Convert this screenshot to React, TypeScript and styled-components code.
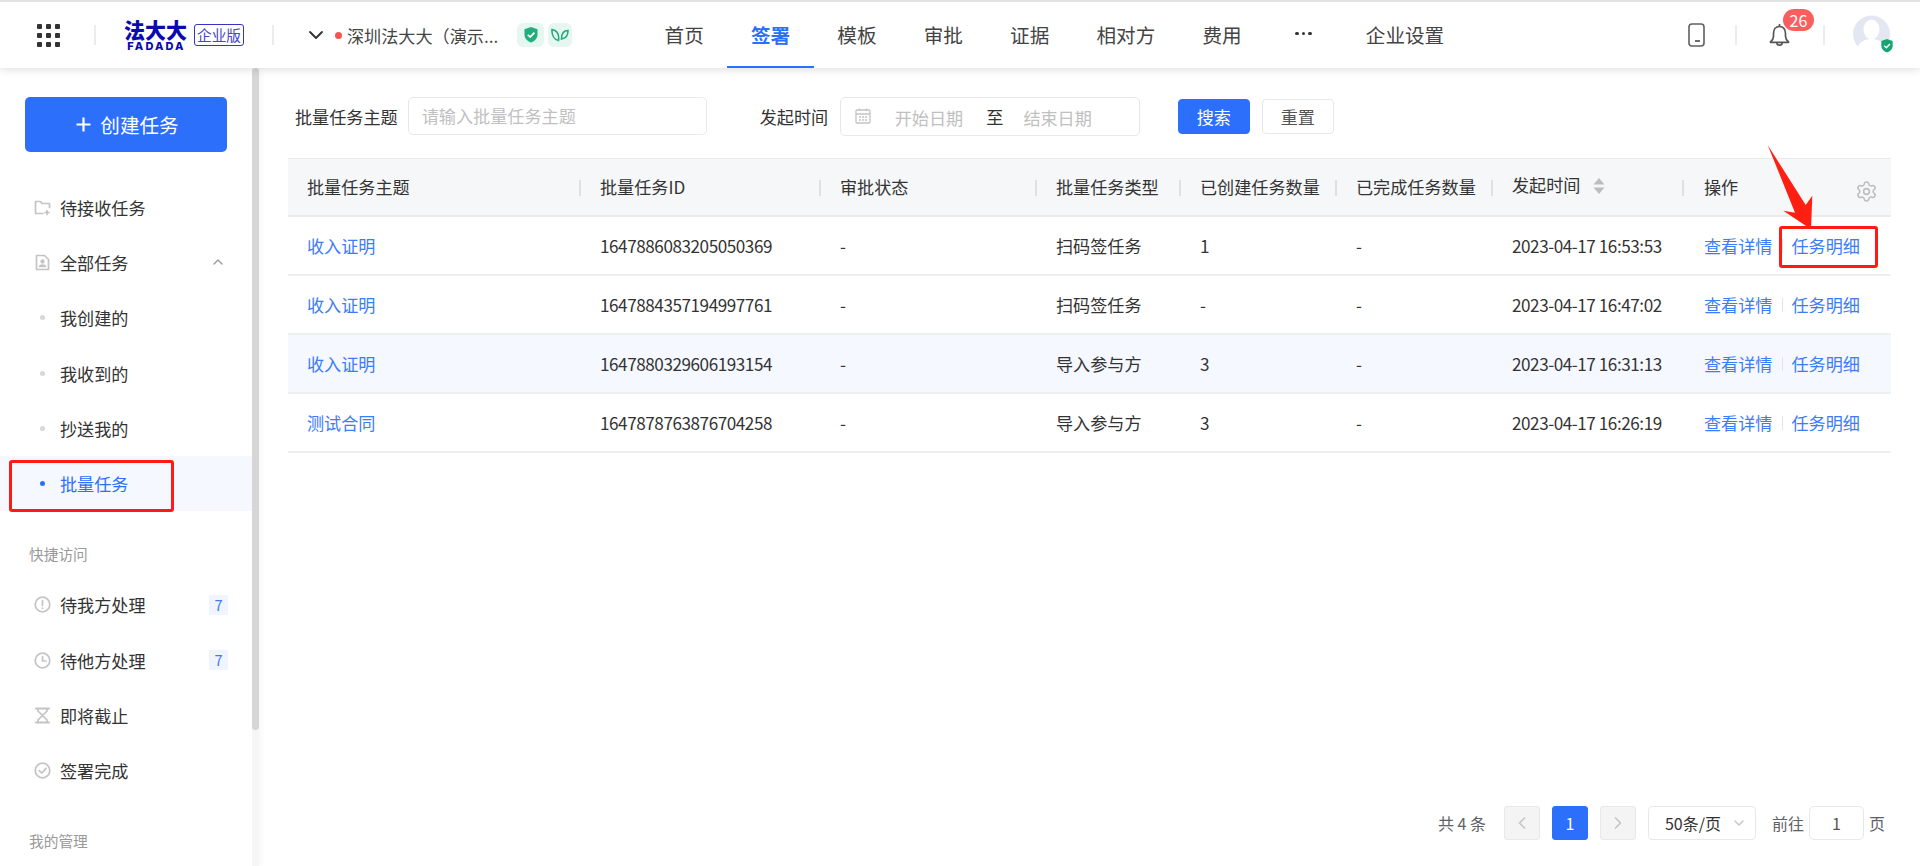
import React from "react";
import styled, { createGlobalStyle } from "styled-components";
import { ChevronDown, ChevronLeft, ChevronRight, ChevronUp, Settings } from "lucide-react";

const Global = createGlobalStyle`
  html, body { margin: 0; padding: 0; height: 100%; overflow: hidden; background: #fff; }
  body { font-family: "Noto Sans CJK SC", "Noto Sans", sans-serif; color: #333; font-size: 17.14px; }
  * { box-sizing: border-box; }
`;

const Page = styled.div`
  width: 1920px;
  height: 866px;
  display: flex;
  flex-direction: column;
  overflow: hidden;
`;

/* ---------- header ---------- */
const Header = styled.header`
  height: 68px;
  flex-shrink: 0;
  display: flex;
  align-items: stretch;
  background: #fff;
  border-top: 2px solid #e2e2e2;
  box-shadow: 0 2px 8px rgba(0, 0, 0, 0.12);
  position: relative;
  z-index: 2;
`;
const HeaderLeft = styled.div`
  width: 641px;
  flex-shrink: 0;
  padding-left: 37px;
  display: flex;
  align-items: center;
`;
const VRule = styled.span`
  width: 2px;
  height: 20px;
  background: #ececec;
  flex-shrink: 0;
`;
const AppsIcon = styled.svg`
  width: 23px;
  height: 23px;
  margin-right: 34px;
  flex-shrink: 0;
`;
const Logo = styled.div`
  width: 59px;
  margin-left: 30px;
  display: flex;
  flex-direction: column;
  align-items: center;
  color: #0a0ab0;
  flex-shrink: 0;
`;
const LogoCn = styled.span`
  font-size: 21px;
  font-weight: 900;
  line-height: 21px;
  white-space: nowrap;
`;
const LogoEn = styled.span`
  font-family: "Inter", sans-serif;
  font-size: 11px;
  font-weight: 800;
  line-height: 10px;
  margin-top: 1px;
  margin-right: -2px;
  letter-spacing: 2.1px;
`;
const Edition = styled.span`
  width: 50px;
  height: 22px;
  margin-left: 9px;
  margin-right: 28px;
  border: 1.5px solid #3434c8;
  border-radius: 3px;
  color: #4646cc;
  font-size: 14.7px;
  line-height: 19px;
  text-align: center;
  flex-shrink: 0;
`;
const SwitchChevron = styled(ChevronDown)`
  margin-left: 30px;
  color: #333;
  flex-shrink: 0;
`;
const RedDot = styled.span`
  width: 7px;
  height: 7px;
  border-radius: 50%;
  background: #f4554f;
  margin-left: 7px;
  flex-shrink: 0;
`;
const Company = styled.span`
  margin-left: 5px;
  width: 170px;
  white-space: nowrap;
  color: #444;
  flex-shrink: 0;
`;
const CertBox = styled.span<{ $w: number }>`
  width: ${(p) => p.$w}px;
  height: 24px;
  margin-right: 4px;
  border-radius: 6px;
  background: #e6f6f0;
  display: flex;
  align-items: center;
  justify-content: center;
  flex-shrink: 0;
`;
const Nav = styled.nav`
  display: flex;
  align-items: stretch;
`;
const NavItem = styled.a<{ $active?: boolean }>`
  padding: 0 23.6px;
  display: flex;
  align-items: center;
  height: 66px;
  font-size: 19.6px;
  color: ${(p) => (p.$active ? "#2b6ffb" : "#444")};
  font-weight: ${(p) => (p.$active ? 700 : 400)};
  border-bottom: 2px solid ${(p) => (p.$active ? "#2b6ffb" : "transparent")};
  white-space: nowrap;
`;
const NavMore = styled.span`
  width: 77px;
  display: flex;
  align-items: center;
  justify-content: center;
  gap: 3px;
  padding-bottom: 3px;
`;
const NavDot = styled.i`
  width: 3.5px;
  height: 3.5px;
  border-radius: 50%;
  background: #333;
`;
const HeaderRight = styled.div`
  margin-left: auto;
  padding-right: 30px;
  display: flex;
  align-items: center;
  gap: 30px;
`;
const PhoneIcon = styled.svg`
  width: 17px;
  height: 24px;
`;
const BellWrap = styled.span`
  position: relative;
  margin: 0 3px 0 2px;
  width: 21px;
  height: 24px;
  display: flex;
`;
const BellBadge = styled.span`
  position: absolute;
  left: 14px;
  top: -14px;
  width: 31px;
  height: 22px;
  border-radius: 11px;
  background: #f95f5f;
  color: #fff;
  font-size: 16px;
  line-height: 22px;
  text-align: center;
`;
const AvatarWrap = styled.span`
  position: relative;
  width: 37px;
  height: 38px;
  display: flex;
  margin: -2px 0 0 -2px;
`;
const AvatarBadge = styled.svg`
  position: absolute;
  left: 27px;
  top: 23px;
  width: 14px;
  height: 16px;
`;

/* ---------- body ---------- */
const Body = styled.div`
  flex: 1;
  min-height: 0;
  display: flex;
`;
const Sidebar = styled.aside`
  width: 252px;
  flex-shrink: 0;
  overflow: hidden;
  padding-top: 29px;
`;
const CreateButton = styled.button`
  display: flex;
  align-items: center;
  justify-content: center;
  gap: 9px;
  margin-left: 25px;
  padding-left: 9px;
  width: 202px;
  height: 55px;
  border: 0;
  border-radius: 5px;
  background: #2b6ffb;
  color: #fff;
  font-family: inherit;
  font-size: 19.6px;
`;
const PlusMark = styled.svg`
  width: 15px;
  height: 15px;
`;
const Menu = styled.div`
  margin-top: 27.5px;
`;
const MenuRow = styled.div<{ $active?: boolean }>`
  position: relative;
  height: 55.3px;
  display: flex;
  align-items: center;
  padding-left: 34px;
  background: ${(p) => (p.$active ? "#f5f8ff" : "transparent")};
  color: ${(p) => (p.$active ? "#2b6ffb" : "#333")};
`;
const MenuIcon = styled.svg`
  width: 17px;
  height: 17px;
  margin-right: 9px;
  flex-shrink: 0;
  color: #c4c4c4;
`;
const Bullet = styled.i<{ $active?: boolean }>`
  width: 5px;
  height: 5px;
  border-radius: 50%;
  margin-left: 6px;
  margin-right: 15px;
  background: ${(p) => (p.$active ? "#2b6ffb" : "#d8d8d8")};
  flex-shrink: 0;
`;
const ExpandIcon = styled(ChevronUp)`
  margin-left: auto;
  margin-right: 26px;
  color: #999;
`;
const Count = styled.span`
  margin-left: auto;
  margin-right: 24px;
  width: 19px;
  height: 20px;
  background: #f0f4ff;
  color: #3f7bf6;
  font-size: 14.7px;
  line-height: 20px;
  text-align: center;
`;
const SectionTitle = styled.div`
  margin: 34px 0 14px 29px;
  font-size: 14.7px;
  line-height: 18px;
  color: #999;
`;
const SideAnnotation = styled.span`
  position: absolute;
  left: 9px;
  top: 4px;
  width: 165px;
  height: 52px;
  border: 3px solid #ff1a12;
  border-radius: 3px;
`;
const ScrollTrack = styled.div`
  width: 7px;
  flex-shrink: 0;
  background: #f6f6f6;
  box-shadow: 3px 0 5px rgba(0, 0, 0, 0.03);
`;
const ScrollThumb = styled.div`
  height: 662px;
  background: #d6d6d6;
  border-radius: 4px;
`;
const Main = styled.main`
  flex: 1;
  min-width: 0;
  display: flex;
  flex-direction: column;
  padding: 28px 29px 26px;
`;
const FilterBar = styled.div`
  height: 40px;
  display: flex;
  align-items: center;
  padding-left: 7px;
  flex-shrink: 0;
`;
const FilterLabel = styled.label`
  margin-right: 10px;
  white-space: nowrap;
`;
const TextInput = styled.div`
  width: 299px;
  height: 38px;
  margin-right: 53px;
  padding-left: 13px;
  border: 1px solid #e8e8e8;
  border-radius: 5px;
  color: #c0c0c0;
  line-height: 36px;
`;
const DateRange = styled.div`
  width: 300px;
  height: 39px;
  margin: 0 38px 0 1.5px;
  padding-left: 14px;
  display: flex;
  align-items: center;
  border: 1px solid #e8e8e8;
  border-radius: 5px;
`;
const CalendarIcon = styled.svg`
  width: 16px;
  height: 16px;
  margin-right: 24px;
  color: #c4c4c4;
  flex-shrink: 0;
`;
const DateHint = styled.span`
  color: #c0c0c0;
  padding-top: 3px;
`;
const DateTo = styled.span`
  margin: 0 20px 0 23px;
`;
const FilterButton = styled.button<{ $primary?: boolean }>`
  width: 72px;
  height: 35px;
  margin-right: 12px;
  border: 1px solid ${(p) => (p.$primary ? "#2b6ffb" : "#e8e8e8")};
  border-radius: 4px;
  background: ${(p) => (p.$primary ? "#2b6ffb" : "#fff")};
  color: ${(p) => (p.$primary ? "#fff" : "#555")};
  font-family: inherit;
  font-size: 17.14px;
`;

const Table = styled.div`
  position: relative;
  margin-top: 22px;
  flex-shrink: 0;
`;
const columns = "293px 240px 216px 144px 156px 156px 191px 1fr";
const HeadRow = styled.div`
  display: grid;
  grid-template-columns: ${columns};
  height: 59px;
  background: #f6f7f9;
  border-top: 1px solid #e8eaec;
  border-bottom: 2px solid #e8eaec;
`;
const HeadCell = styled.div`
  position: relative;
  display: flex;
  align-items: center;
  padding: 0 0 2px 19px;
  white-space: nowrap;
  color: #333;
  &:last-child {
    padding-left: 20px;
  }
  &:not(:last-child)::after {
    content: "";
    position: absolute;
    right: 0;
    top: 21px;
    width: 2px;
    height: 16px;
    background: #e0e0e0;
  }
`;
const SortIcon = styled.svg`
  width: 12px;
  height: 16px;
  margin-left: 12px;
`;
const TimeHead = styled.span`
  position: relative;
  top: -2px;
`;
const GearIcon = styled(Settings)`
  position: absolute;
  left: 171px;
  top: 21px;
  color: #bdbdbd;
`;
const Row = styled.div<{ $hover?: boolean }>`
  display: grid;
  grid-template-columns: ${columns};
  height: 59px;
  border-bottom: 2px solid #eeeff1;
  background: ${(p) => (p.$hover ? "#f5f8ff" : "#fff")};
`;
const Cell = styled.div`
  position: relative;
  display: flex;
  align-items: center;
  padding-left: 19px;
  white-space: nowrap;
  &:last-child {
    padding-left: 20px;
  }
`;
const Numeric = styled.span`
  letter-spacing: -0.45px;
`;
const Link = styled.a`
  color: #3c7cf8;
`;
const OpRule = styled.span`
  width: 1px;
  height: 14px;
  margin: 0 9px;
  background: #e2e4e8;
`;
const OpAnnotation = styled.span`
  position: absolute;
  left: 95px;
  top: 9px;
  width: 99px;
  height: 42px;
  border: 3px solid #ff1a12;
  border-radius: 3px;
`;
const Arrow = styled.svg`
  position: absolute;
  left: 1479px;
  top: -13px;
  width: 46px;
  height: 86px;
`;

const Pagination = styled.div`
  margin-top: auto;
  height: 34px;
  padding-right: 6px;
  display: flex;
  align-items: center;
  justify-content: flex-end;
  font-size: 16px;
  color: #606266;
  flex-shrink: 0;
`;
const Total = styled.span`
  margin-right: 18px;
  white-space: pre;
`;
const PageBtn = styled.span<{ $current?: boolean }>`
  width: 36px;
  height: 34px;
  margin-right: 12px;
  display: flex;
  align-items: center;
  justify-content: center;
  border: 1px solid ${(p) => (p.$current ? "#2b6ffb" : "#e8e8e8")};
  border-radius: 3px;
  background: ${(p) => (p.$current ? "#2b6ffb" : "#f4f4f4")};
  color: ${(p) => (p.$current ? "#fff" : "#c4c4c4")};
`;
const SizeSelect = styled.span`
  width: 108px;
  height: 34px;
  margin-right: 16px;
  padding: 0 8px 0 16px;
  display: flex;
  align-items: center;
  justify-content: space-between;
  border: 1px solid #e8e8e8;
  border-radius: 4px;
  color: #333;
`;
const JumpInput = styled.span`
  width: 55px;
  height: 34px;
  margin: 0 5px;
  border: 1px solid #e8e8e8;
  border-radius: 5px;
  text-align: center;
  line-height: 32px;
  color: #555;
`;

/* ---------- data ---------- */
const rows = [
  { name: "收入证明", id: "1647886083205050369", type: "扫码签任务", made: "1", time: "2023-04-17 16:53:53" },
  { name: "收入证明", id: "1647884357194997761", type: "扫码签任务", made: "-", time: "2023-04-17 16:47:02" },
  { name: "收入证明", id: "1647880329606193154", type: "导入参与方", made: "3", time: "2023-04-17 16:31:13" },
  { name: "测试合同", id: "1647878763876704258", type: "导入参与方", made: "3", time: "2023-04-17 16:26:19" },
];

const Apps = () => (
  <AppsIcon viewBox="0 0 23 23" fill="#333">
    {[0, 9, 18].map((y) =>
      [0, 9, 18].map((x) => <rect key={`${x}-${y}`} x={x} y={y} width="5" height="5" rx="1" />)
    )}
  </AppsIcon>
);

const Glyph = ({ children }: { children: React.ReactNode }) => (
  <MenuIcon viewBox="0 0 17 17" fill="none" stroke="currentColor" strokeWidth="1.7" strokeLinecap="round" strokeLinejoin="round">
    {children}
  </MenuIcon>
);

const ShieldPath = "M8 1 L14.5 3.2 V8.5 C14.5 12.5 11.5 15.2 8 16.5 C4.5 15.2 1.5 12.5 1.5 8.5 V3.2 Z";

export default function App() {
  return (
    <Page>
      <Global />
      <Header>
        <HeaderLeft>
          <Apps />
          <VRule />
          <Logo>
            <LogoCn>法大大</LogoCn>
            <LogoEn>FADADA</LogoEn>
          </Logo>
          <Edition>企业版</Edition>
          <VRule />
          <SwitchChevron size={24} strokeWidth={1.9} />
          <RedDot />
          <Company>深圳法大大（演示...</Company>
          <CertBox $w={27}>
            <svg width="16" height="18" viewBox="0 0 16 18">
              <path d={ShieldPath} fill="#22ad7c" />
              <path d="M4.8 8.8 L7.2 11 L11.4 6.6" fill="none" stroke="#fff" strokeWidth="1.7" />
            </svg>
          </CertBox>
          <CertBox $w={24}>
            <svg width="18" height="14" viewBox="0 0 18 14" fill="none" stroke="#22ad7c" strokeWidth="1.6">
              <path d="M1 1.5 C6 2.5 8.5 6 7.5 12.5 C3.5 11.5 0.5 7.5 1 1.5 Z" />
              <path d="M17 2.5 C13 2.5 10.5 5 10.5 11 C14.5 10.5 17 7.5 17 2.5 Z" />
            </svg>
          </CertBox>
        </HeaderLeft>
        <Nav>
          <NavItem>首页</NavItem>
          <NavItem $active>签署</NavItem>
          <NavItem>模板</NavItem>
          <NavItem>审批</NavItem>
          <NavItem>证据</NavItem>
          <NavItem>相对方</NavItem>
          <NavItem>费用</NavItem>
          <NavMore>
            <NavDot />
            <NavDot />
            <NavDot />
          </NavMore>
          <NavItem>企业设置</NavItem>
        </Nav>
        <HeaderRight>
          <PhoneIcon viewBox="0 0 17 24" fill="none" stroke="#606060" strokeWidth="1.6">
            <rect x="1" y="1" width="15" height="22" rx="3" />
            <path d="M7 18 H12" strokeWidth="1.8" />
          </PhoneIcon>
          <VRule />
          <BellWrap>
            <svg width="21" height="24" viewBox="0 0 21 24" fill="none" stroke="#555" strokeWidth="1.7">
              <path d="M10.5 1 V3.5" />
              <path d="M10.5 3.5 C6.5 3.5 4.5 6.5 4.5 10.5 V13.5 C4.5 15.8 3 17.5 1.5 18.8 V19.3 H19.5 V18.8 C18 17.5 16.5 15.8 16.5 13.5 V10.5 C16.5 6.5 14.5 3.5 10.5 3.5 Z" strokeLinejoin="round" />
              <path d="M7.8 19.5 A2.7 2.7 0 0 0 13.2 19.5" />
            </svg>
            <BellBadge>26</BellBadge>
          </BellWrap>
          <VRule />
          <AvatarWrap>
            <svg width="37" height="38" viewBox="0 0 37 38">
              <circle cx="18.5" cy="19" r="18.5" fill="#e3e7f2" />
              <ellipse cx="18.5" cy="14.5" rx="8" ry="10" fill="#fff" />
              <path d="M4 33 C7 26 13 24 18.5 24 C24 24 30 26 33 33 C29 36.5 24 37.8 18.5 37.8 C13 37.8 8 36.5 4 33 Z" fill="#fff" />
            </svg>
            <AvatarBadge viewBox="0 0 16 18">
              <path d={ShieldPath} fill="#17a673" />
              <path d="M4.8 8.8 L7.2 11 L11.4 6.6" fill="none" stroke="#fff" strokeWidth="1.7" />
            </AvatarBadge>
          </AvatarWrap>
        </HeaderRight>
      </Header>

      <Body>
        <Sidebar>
          <CreateButton>
            <PlusMark viewBox="0 0 15 15" stroke="#fff" strokeWidth="2.2">
              <path d="M7.5 0.5 V14.5 M0.5 7.5 H14.5" />
            </PlusMark>
            创建任务
          </CreateButton>
          <Menu>
            <MenuRow>
              <Glyph>
                <path d="M15.5 8.5 V4.5 H8 L6.5 2.5 H1.5 V14.5 H9" />
                <path d="M13 11.5 V15.5 M11 13.5 H15" />
              </Glyph>
              待接收任务
            </MenuRow>
            <MenuRow>
              <Glyph>
                <path d="M2.5 1.5 H10.5 L14.5 5.5 V15.5 H2.5 Z" />
                <circle cx="8.5" cy="7.5" r="1.3" fill="currentColor" />
                <path d="M5.5 12.3 C6.3 10.8 10.7 10.8 11.5 12.3 Z" fill="currentColor" />
              </Glyph>
              全部任务
              <ExpandIcon size={16} strokeWidth={2} />
            </MenuRow>
            <MenuRow>
              <Bullet />
              我创建的
            </MenuRow>
            <MenuRow>
              <Bullet />
              我收到的
            </MenuRow>
            <MenuRow>
              <Bullet />
              抄送我的
            </MenuRow>
            <MenuRow $active>
              <Bullet $active />
              批量任务
              <SideAnnotation />
            </MenuRow>
          </Menu>
          <SectionTitle>快捷访问</SectionTitle>
          <MenuRow>
            <Glyph>
              <circle cx="8.5" cy="8.5" r="7.3" />
              <path d="M8.5 4.5 V9.5 M8.5 12 V12.4" />
            </Glyph>
            待我方处理
            <Count>7</Count>
          </MenuRow>
          <MenuRow>
            <Glyph>
              <circle cx="8.5" cy="8.5" r="7.3" />
              <path d="M8.5 4.5 V9 H12" />
            </Glyph>
            待他方处理
            <Count>7</Count>
          </MenuRow>
          <MenuRow>
            <Glyph>
              <path d="M2 1.5 H15 M2 15.5 H15" strokeWidth="2.2" />
              <path d="M4 2 V4 L13 13 V15 M13 2 V4 L4 13 V15" />
            </Glyph>
            即将截止
          </MenuRow>
          <MenuRow>
            <Glyph>
              <circle cx="8.5" cy="8.5" r="7.3" />
              <path d="M5.2 8.6 L7.8 11 L12 6.4" />
            </Glyph>
            签署完成
          </MenuRow>
          <SectionTitle>我的管理</SectionTitle>
        </Sidebar>
        <ScrollTrack>
          <ScrollThumb />
        </ScrollTrack>
        <Main>
          <FilterBar>
            <FilterLabel>批量任务主题</FilterLabel>
            <TextInput>请输入批量任务主题</TextInput>
            <FilterLabel>发起时间</FilterLabel>
            <DateRange>
              <CalendarIcon viewBox="0 0 16 16" fill="none" stroke="currentColor" strokeWidth="1.3">
                <rect x="1" y="2" width="14" height="13" rx="1" />
                <path d="M1 6 H15 M4.5 0.5 V3 M11.5 0.5 V3 M4 9 H6 M7 9 H9 M10 9 H12 M4 12 H6 M7 12 H9 M10 12 H12" />
              </CalendarIcon>
              <DateHint>开始日期</DateHint>
              <DateTo>至</DateTo>
              <DateHint>结束日期</DateHint>
            </DateRange>
            <FilterButton $primary>搜索</FilterButton>
            <FilterButton>重置</FilterButton>
          </FilterBar>

          <Table>
            <HeadRow>
              <HeadCell>批量任务主题</HeadCell>
              <HeadCell>批量任务ID</HeadCell>
              <HeadCell>审批状态</HeadCell>
              <HeadCell>批量任务类型</HeadCell>
              <HeadCell>已创建任务数量</HeadCell>
              <HeadCell>已完成任务数量</HeadCell>
              <HeadCell>
                <TimeHead>发起时间</TimeHead>
                <SortIcon viewBox="0 0 12 16" fill="#bdbdbd">
                  <path d="M6 0 L11.5 6.5 H0.5 Z M6 16 L11.5 9.5 H0.5 Z" />
                </SortIcon>
              </HeadCell>
              <HeadCell>
                操作
                <GearIcon size={23} strokeWidth={1.6} />
              </HeadCell>
            </HeadRow>
            {rows.map((r, i) => (
              <Row key={r.id} $hover={i === 2}>
                <Cell>
                  <Link>{r.name}</Link>
                </Cell>
                <Cell>
                  <Numeric>{r.id}</Numeric>
                </Cell>
                <Cell>-</Cell>
                <Cell>{r.type}</Cell>
                <Cell>{r.made}</Cell>
                <Cell>-</Cell>
                <Cell>
                  <Numeric>{r.time}</Numeric>
                </Cell>
                <Cell>
                  <Link>查看详情</Link>
                  <OpRule />
                  <Link>任务明细</Link>
                  {i === 0 && <OpAnnotation />}
                </Cell>
              </Row>
            ))}
            <Arrow viewBox="0 0 46 86">
              <polygon points="0.7,0 38.7,60 45.3,50.7 44,84.3 16.3,65.7 28,67.7" fill="#ff1e12" />
            </Arrow>
          </Table>

          <Pagination>
            <Total>共 4 条</Total>
            <PageBtn>
              <ChevronLeft size={20} />
            </PageBtn>
            <PageBtn $current>1</PageBtn>
            <PageBtn>
              <ChevronRight size={20} />
            </PageBtn>
            <SizeSelect>
              50条/页
              <ChevronDown size={16} color="#c4c4c4" />
            </SizeSelect>
            前往
            <JumpInput>1</JumpInput>页
          </Pagination>
        </Main>
      </Body>
    </Page>
  );
}
